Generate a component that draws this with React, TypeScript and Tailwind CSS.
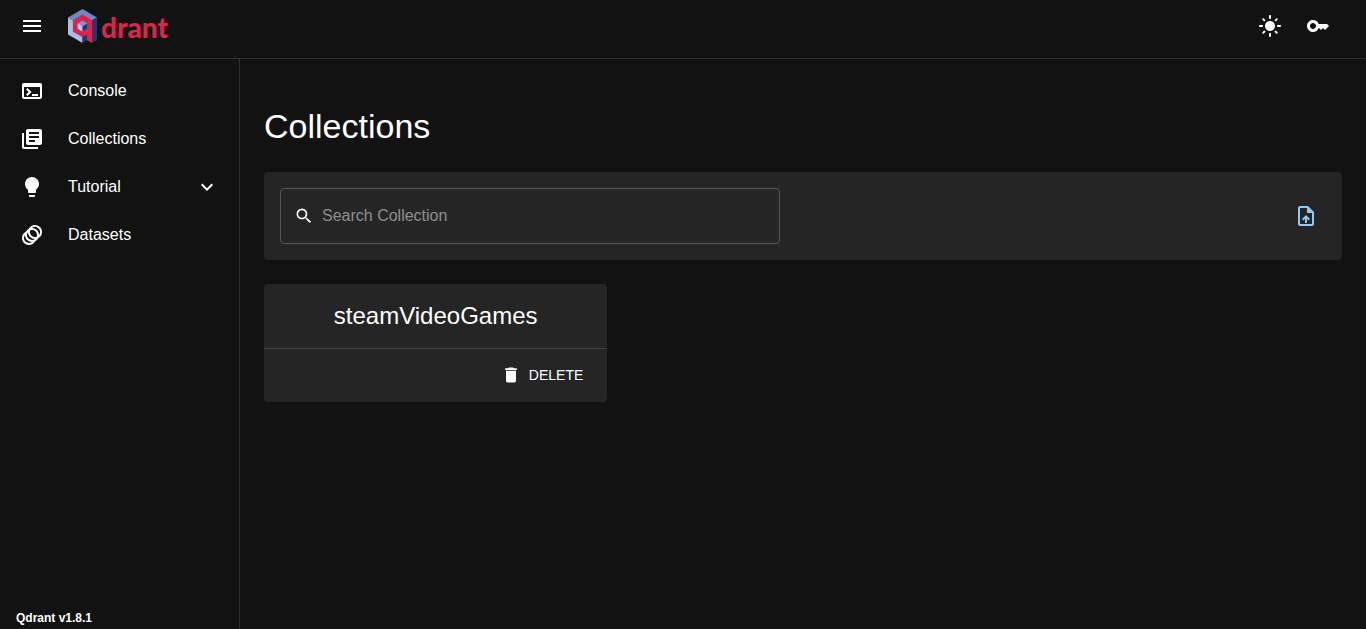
import { useState } from 'react';
import type { IconType } from 'react-icons';
import {
  MdAnimation,
  MdDelete,
  MdExpandMore,
  MdKey,
  MdLibraryBooks,
  MdLightbulb,
  MdLightMode,
  MdMenu,
  MdOutlineUploadFile,
  MdSearch,
  MdTerminal,
} from 'react-icons/md';

type NavItem = { label: string; icon: IconType; expandable?: boolean };

const navItems: NavItem[] = [
  { label: 'Console', icon: MdTerminal },
  { label: 'Collections', icon: MdLibraryBooks },
  { label: 'Tutorial', icon: MdLightbulb, expandable: true },
  { label: 'Datasets', icon: MdAnimation },
];

const collections = ['steamVideoGames'];

function Logo() {
  return (
    <a href="#/" className="flex items-center gap-1 text-[#dc244c]">
      <svg viewBox="0 0 29 34" className="h-[34px] w-[29px]" aria-hidden="true">
        <path d="M14.5 0 29 8.4 23.9 12 14.5 17 0 8.4Z" fill="#6f88c4" />
        <path d="M0 8.4 14.5 17v17L0 25.5Z" fill="#aebce8" />
        <path d="M23.8 11.3 29 8.4v22.8L23.8 34Z" fill="#24386c" />
        <path d="M14.5 28.2 19 25.6v5.5L14.5 34Z" fill="#24386c" />
        <path d="m14.5 5.6 9.6 5.6V34L19 31.2v-5.6l-4.5 2.6-9.6-5.5V11.2Z" fill="#dc244c" />
        <path d="m14.5 11.6 4.8 2.8v5.4l-4.8 2.8-4.8-2.8v-5.4Z" fill="#7e94cf" />
        <path d="m9.7 14.4 4.8 2.8v5.4l-4.8-2.8Z" fill="#b8c6ee" />
        <path d="m14.5 17.2 4.8-2.8v5.4l-4.8 2.8Z" fill="#24386c" />
      </svg>
      <span className="pt-0.5 font-[Lato,sans-serif] text-[28px] leading-8 font-black">drant</span>
    </a>
  );
}

function Header({ onToggle }: { onToggle: () => void }) {
  return (
    <header className="border-b border-[#2f2f2f] pb-1.5">
      <div className="flex h-13 items-center pr-6 pl-5">
        <button type="button" aria-label="Toggle menu" onClick={onToggle} className="mr-6">
          <MdMenu className="size-6" />
        </button>
        <Logo />
        <div className="ml-auto flex items-center gap-2 pr-1">
          <button type="button" aria-label="Switch theme" className="p-2">
            <MdLightMode className="size-6" />
          </button>
          <button type="button" aria-label="API key" className="p-2">
            <MdKey className="size-6" />
          </button>
        </div>
      </div>
    </header>
  );
}

function Sidebar() {
  return (
    <aside className="flex w-60 shrink-0 flex-col border-r border-[#2f2f2f]">
      <nav className="pt-2">
        {navItems.map(({ label, icon: Icon, expandable }) => (
          <a key={label} href={`#/${label.toLowerCase()}`} className="flex h-12 items-center px-5">
            <Icon className="mr-6 size-6" />
            <span className="leading-6">{label}</span>
            {expandable && <MdExpandMore className="ml-auto size-6" />}
          </a>
        ))}
      </nav>
      <p className="mt-auto px-4 pb-px text-xs leading-5 font-bold">Qdrant v1.8.1</p>
    </aside>
  );
}

function CollectionCard({ name, onDelete }: { name: string; onDelete: () => void }) {
  return (
    <article className="rounded bg-[#252525]">
      <h2 className="border-b border-[#434343] py-4 text-center text-2xl leading-8">{name}</h2>
      <div className="flex justify-end px-6 pt-3 pb-[13px]">
        <button type="button" onClick={onDelete} className="flex items-center gap-2 text-sm leading-7 uppercase">
          <MdDelete className="size-5" />
          Delete
        </button>
      </div>
    </article>
  );
}

export default function App() {
  const [open, setOpen] = useState(true);
  const [query, setQuery] = useState('');
  const [items, setItems] = useState(collections);
  const shown = items.filter((name) => name.toLowerCase().includes(query.toLowerCase()));

  return (
    <div className="flex min-h-screen flex-col bg-[#121212] font-['Liberation_Sans',Arial,sans-serif] text-base text-white">
      <Header onToggle={() => setOpen(!open)} />
      <div className="flex flex-1">
        {open && <Sidebar />}
        <main className="min-w-0 flex-1 px-6 pt-[47px] pb-6">
          <h1 className="mb-[26px] text-[34px] leading-10">Collections</h1>
          <section className="mb-6 flex items-center justify-between rounded bg-[#252525] p-4">
            <label className="flex h-14 w-full max-w-[500px] items-center gap-2 rounded border border-[#575757] px-[13px]">
              <MdSearch className="size-5" />
              <input
                type="text"
                aria-label="Search Collection"
                placeholder="Search Collection"
                value={query}
                onChange={(event) => setQuery(event.target.value)}
                className="min-w-0 flex-1 bg-transparent outline-none placeholder:text-[#8f8f8f]"
              />
            </label>
            <button type="button" aria-label="Upload snapshot" className="p-2 text-[#90caf9]">
              <MdOutlineUploadFile className="size-6" />
            </button>
          </section>
          <div className="grid grid-cols-1 gap-6 sm:grid-cols-2 lg:grid-cols-3">
            {shown.map((name) => (
              <CollectionCard
                key={name}
                name={name}
                onDelete={() => setItems(items.filter((item) => item !== name))}
              />
            ))}
          </div>
        </main>
      </div>
    </div>
  );
}
